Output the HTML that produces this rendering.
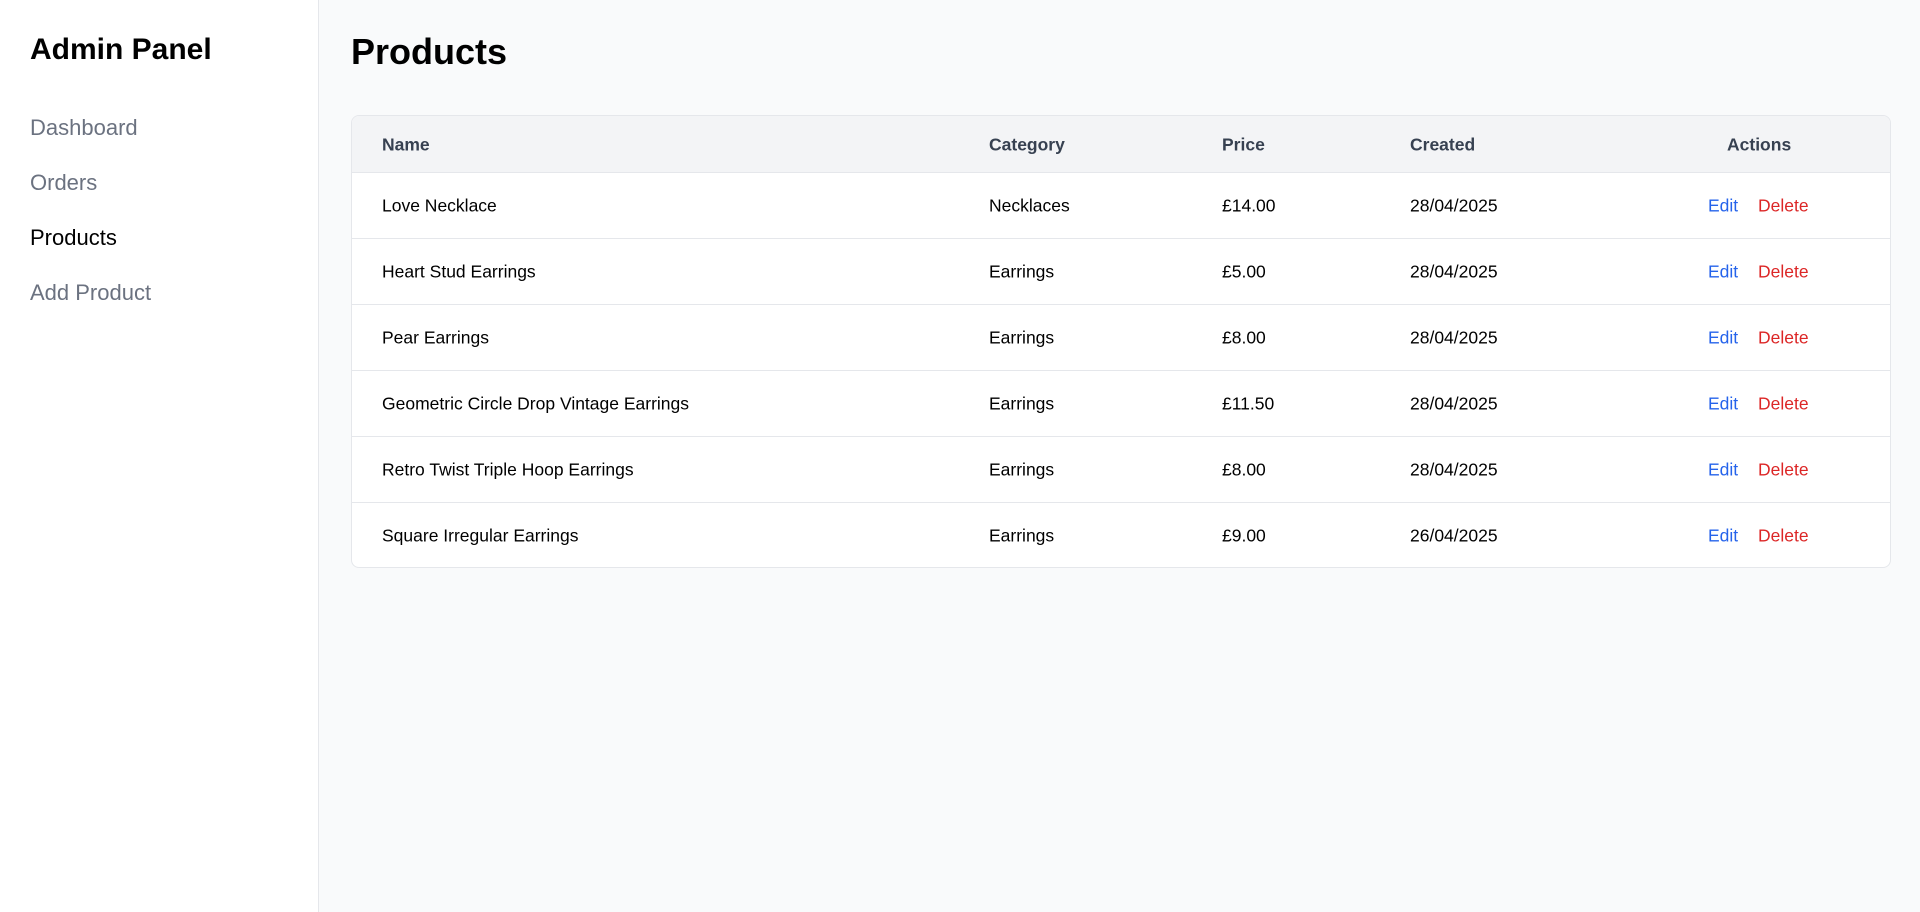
<!DOCTYPE html>
<html><head><meta charset="utf-8"><style>
*{box-sizing:border-box;margin:0;padding:0}
body{width:1920px;height:912px;background:#f9fafb;font-family:"Liberation Sans",Arial,sans-serif;position:relative;overflow:hidden}
.side{position:absolute;left:0;top:0;width:319px;height:912px;background:#fff;border-right:1px solid #e5e7eb}
.abs{position:absolute;line-height:1;white-space:nowrap}
.title{left:30px;top:35px;font-size:30px;font-weight:bold;color:#000}
.nav{left:30px;font-size:22px;color:#6b7280}
.h1{left:351px;top:34px;font-size:36px;font-weight:bold;color:#000}
.tbl{position:absolute;left:351px;top:115px;width:1540px;height:453px;background:#fff;border:1px solid #e5e7eb;border-radius:8px;overflow:hidden}
.row{position:absolute;left:0;width:100%;height:66px;border-top:1px solid #e5e7eb;font-size:17.5px;color:#000}
.hdr{position:absolute;left:0;top:0;width:100%;height:57px;background:#f3f4f6;font-size:17.5px;font-weight:bold;color:#374151}
.c{position:absolute;top:50%;transform:translateY(-50%);line-height:1;white-space:nowrap}
</style></head><body>
<div class="side">
<div class="abs title">Admin Panel</div>
<div class="abs nav" style="top:117px">Dashboard</div>
<div class="abs nav" style="top:172px">Orders</div>
<div class="abs nav" style="top:227px;color:#000">Products</div>
<div class="abs nav" style="top:282px">Add Product</div>
</div>
<div class="abs h1">Products</div>
<div class="tbl">
<div class="hdr">
<span class="c" style="left:30px">Name</span>
<span class="c" style="left:637px">Category</span>
<span class="c" style="left:870px">Price</span>
<span class="c" style="left:1058px">Created</span>
<span class="c" style="left:1375px">Actions</span>
</div>
<div class="row" style="top:56px"><span class="c" style="left:30px">Love Necklace</span><span class="c" style="left:637px">Necklaces</span><span class="c" style="left:870px">£14.00</span><span class="c" style="left:1058px">28/04/2025</span><span class="c" style="left:1356px;color:#2563eb">Edit</span><span class="c" style="left:1406px;color:#dc2626">Delete</span></div>
<div class="row" style="top:122px"><span class="c" style="left:30px">Heart Stud Earrings</span><span class="c" style="left:637px">Earrings</span><span class="c" style="left:870px">£5.00</span><span class="c" style="left:1058px">28/04/2025</span><span class="c" style="left:1356px;color:#2563eb">Edit</span><span class="c" style="left:1406px;color:#dc2626">Delete</span></div>
<div class="row" style="top:188px"><span class="c" style="left:30px">Pear Earrings</span><span class="c" style="left:637px">Earrings</span><span class="c" style="left:870px">£8.00</span><span class="c" style="left:1058px">28/04/2025</span><span class="c" style="left:1356px;color:#2563eb">Edit</span><span class="c" style="left:1406px;color:#dc2626">Delete</span></div>
<div class="row" style="top:254px"><span class="c" style="left:30px">Geometric Circle Drop Vintage Earrings</span><span class="c" style="left:637px">Earrings</span><span class="c" style="left:870px">£11.50</span><span class="c" style="left:1058px">28/04/2025</span><span class="c" style="left:1356px;color:#2563eb">Edit</span><span class="c" style="left:1406px;color:#dc2626">Delete</span></div>
<div class="row" style="top:320px"><span class="c" style="left:30px">Retro Twist Triple Hoop Earrings</span><span class="c" style="left:637px">Earrings</span><span class="c" style="left:870px">£8.00</span><span class="c" style="left:1058px">28/04/2025</span><span class="c" style="left:1356px;color:#2563eb">Edit</span><span class="c" style="left:1406px;color:#dc2626">Delete</span></div>
<div class="row" style="top:386px"><span class="c" style="left:30px">Square Irregular Earrings</span><span class="c" style="left:637px">Earrings</span><span class="c" style="left:870px">£9.00</span><span class="c" style="left:1058px">26/04/2025</span><span class="c" style="left:1356px;color:#2563eb">Edit</span><span class="c" style="left:1406px;color:#dc2626">Delete</span></div>
</div>
</body></html>
